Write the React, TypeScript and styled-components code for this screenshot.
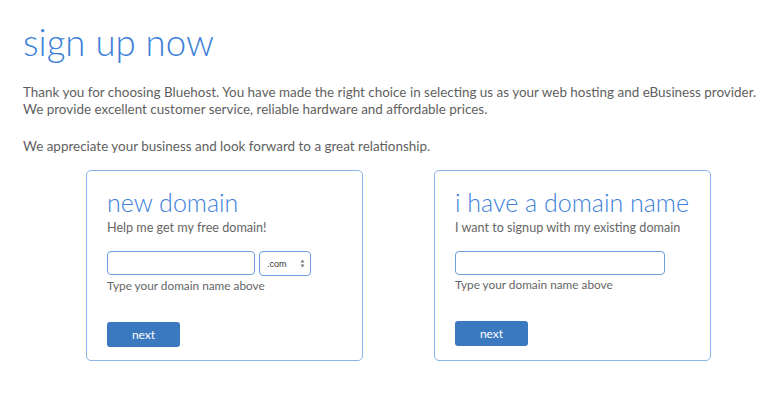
import React from "react";
import styled, { createGlobalStyle } from "styled-components";

const Global = createGlobalStyle`
  html, body { margin: 0; padding: 0; background: #fff; }
  body { font-family: Lato, "Open Sans", sans-serif; color: #606060; }
  * { box-sizing: border-box; }
`;

const Page = styled.div`
  padding: 20px 0 0 23px;
  width: 768px;
`;

const Title = styled.h1`
  margin: 0;
  font-weight: 300;
  font-size: 36.6px;
  line-height: 44px;
  color: #3d7fd9;
`;

const Intro = styled.p`
  margin: 20px 0 0;
  font-size: 13.45px;
  line-height: 17px;
  color: #5f5f5f;
  white-space: nowrap;
`;

const Intro2 = styled(Intro)`
  margin-top: 20px;
`;

const Cards = styled.div`
  display: flex;
  gap: 71px;
  margin: 15px 0 0 63px;
`;

const Card = styled.div`
  width: 277px;
  height: 191px;
  border: 1px solid #8cb2ea;
  border-radius: 5px;
  padding: 16px 20px 0 20px;
  display: flex;
  flex-direction: column;
`;

const CardTitle = styled.h2`
  margin: 0;
  font-weight: 300;
  font-size: 25px;
  line-height: 30px;
  color: #3d7fd9;
  white-space: nowrap;
`;

const Sub = styled.div`
  font-size: 12.6px;
  line-height: 16px;
  margin-top: 3px;
  color: #666;
  white-space: nowrap;
`;

const Row = styled.div`
  display: flex;
  gap: 4px;
  margin-top: 15px;
`;

const Input = styled.input<{ $w: number }>`
  width: ${(p) => p.$w}px;
  height: 24px;
  border: 1px solid #6d9ddb;
  border-radius: 4px;
  outline: none;
  padding: 0 6px;
  font-family: inherit;
`;

const SelectBox = styled.div`
  width: 52px;
  height: 25px;
  border: 1px solid #6d9ddb;
  border-radius: 4px;
  display: flex;
  align-items: center;
  justify-content: space-between;
  padding: 0 5px 0 7px;
  font-family: "Liberation Sans", Arial, sans-serif;
  font-size: 9px;
  color: #333;
`;

const Arrows = styled.svg`
  width: 5px;
  height: 9px;
`;

const Help = styled.div`
  font-size: 11.8px;
  line-height: 16px;
  margin-top: 2px;
  color: #666;
`;

const Button = styled.button`
  margin-top: 28px;
  width: 73px;
  height: 25px;
  border: none;
  border-radius: 3px;
  background: #3a78c0;
  color: #fff;
  font-family: inherit;
  font-size: 12px;
  cursor: pointer;
`;

export default function App() {
  return (
    <>
      <Global />
      <Page>
        <Title>sign up now</Title>
        <Intro>
          Thank you for choosing Bluehost. You have made the right choice in selecting us as your web hosting and eBusiness provider.
          <br />
          We provide excellent customer service, reliable hardware and affordable prices.
        </Intro>
        <Intro2>We appreciate your business and look forward to a great relationship.</Intro2>
        <Cards>
          <Card>
            <CardTitle>new domain</CardTitle>
            <Sub>Help me get my free domain!</Sub>
            <Row>
              <Input $w={148} />
              <SelectBox>
                <span>.com</span>
                <Arrows viewBox="0 0 5 9">
                  <path d="M2.5 0.5 L4.5 3.5 L0.5 3.5 Z M2.5 8.5 L4.5 5.5 L0.5 5.5 Z" fill="#777" />
                </Arrows>
              </SelectBox>
            </Row>
            <Help>Type your domain name above</Help>
            <Button>next</Button>
          </Card>
          <Card>
            <CardTitle>i have a domain name</CardTitle>
            <Sub>I want to signup with my existing domain</Sub>
            <Row>
              <Input $w={210} />
            </Row>
            <Help>Type your domain name above</Help>
            <Button>next</Button>
          </Card>
        </Cards>
      </Page>
    </>
  );
}
